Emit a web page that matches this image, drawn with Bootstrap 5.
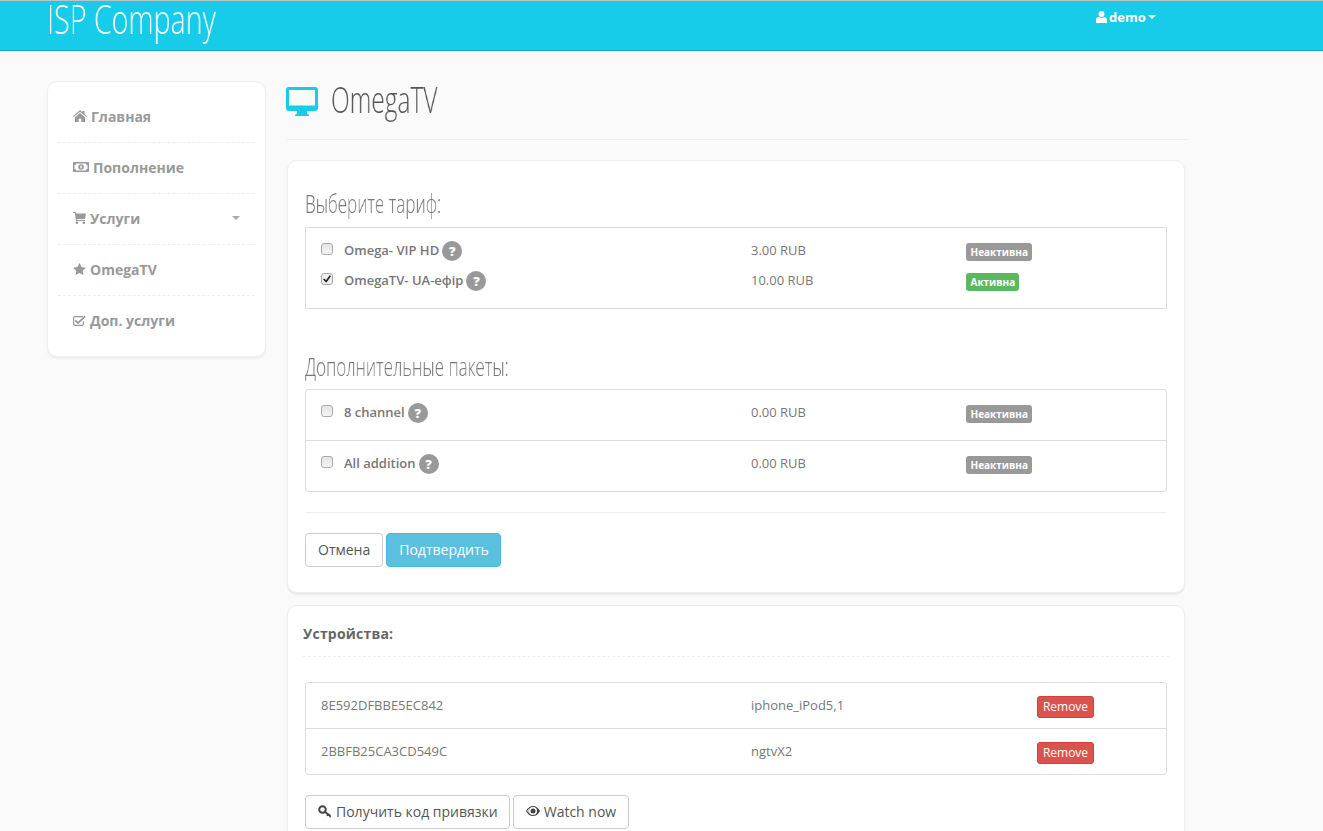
<!DOCTYPE html>
<html lang="ru">
<head>
<meta charset="utf-8">
<title>OmegaTV</title>
<link href="https://cdn.jsdelivr.net/npm/bootstrap@5.3.0/dist/css/bootstrap.min.css" rel="stylesheet">
<style>
html,body{height:831px;overflow:hidden}
body{background:#fafafa;font-family:"Open Sans","Noto Sans",sans-serif;font-size:13px;color:#777}
.topbar{height:51px;background:#17cce9;border-top:1px solid #b9c4c6;border-bottom:1px solid #10aac4;padding:0;align-items:flex-start;flex-wrap:nowrap}
.brandname{display:block;margin-left:47px;color:#fff;font-size:40px;font-weight:300;line-height:36px;transform:scaleX(.714);transform-origin:0 0;will-change:transform;white-space:nowrap;padding:0;text-decoration:none}
.usermenu{position:absolute;left:1096px;top:7px;color:#fff;font-size:13px;font-weight:700;display:flex;align-items:center;gap:2px;line-height:18px;text-decoration:none}
.usermenu svg{fill:#fff}
.caretmark{display:inline-block;border-left:4px solid transparent;border-right:4px solid transparent;border-top:4px solid currentColor}
.pagewrap{padding:30px 0 0 47px;gap:21px}
.sidepanel{width:219px;height:276px;flex:none;border:1px solid #eee;border-radius:10px;box-shadow:0 2px 2px #eee;background:#fff;padding:10px 10px}
.sideitem{height:51px;display:flex;align-items:center;padding:0 15px 2px;gap:4px;color:#999;font-size:14px;font-weight:700;border-bottom:1px dashed #eee;text-decoration:none}
.sideitem:last-child{border-bottom:0}
.sideitem svg{fill:#999;flex:none}
.sideitem .caretmark{margin-left:auto;color:#aaa}
.mainarea{width:902px;flex:none}
.pagehead{height:59px;border-bottom:1px solid #eee;margin:0 0 20px;width:901px;display:flex;align-items:flex-start;gap:12px;padding-top:6px}
.pagehead svg{margin-left:-1px;margin-right:1px}
.pagehead h1{font-size:36px;font-weight:300;color:#555;margin:0;line-height:26px;transform:scaleX(.68);transform-origin:0 0;will-change:transform;white-space:nowrap}
.whitebox{width:898px;border:1px solid #eee;border-radius:10px;box-shadow:0 2px 2px #e8e8e8;background:#fff;margin-bottom:12px}
.boxone{height:433px;padding:0 17px}
.boxtwo{height:400px;padding:0 15px}
.sectitle{font-size:25px;font-weight:300;color:#777;margin:0;line-height:30px;transform:scaleX(.68);transform-origin:0 0;will-change:transform;white-space:nowrap}
.titleone{padding-top:27px;height:66px}
.titletwo{margin-top:43px;height:37px;line-height:28px}
.framed{border:1px solid #ddd;padding:0}
.tarifbox{height:82px;padding-top:8px;border-radius:0}
.addonbox{border-radius:3px}
.devicebox{border-radius:3px;margin:0 2px}
.linerow{display:flex;align-items:center;padding:0 0 0 15px;background:transparent;border:0;color:#777;font-size:13px}
.tarifbox .linerow{height:30px}
.addonbox .linerow{height:50px;align-items:flex-start;padding-top:13px}
.addonbox .linerow+.linerow{height:51px;border-top:1px solid #ddd}
.devicebox .linerow{height:45px}
.devicebox .linerow+.linerow{height:46px;border-top:1px solid #ddd}
.namecell{width:430px;flex:none;display:flex;align-items:center;font-weight:600;gap:3px}
.namecell input{appearance:none;width:12px;height:12px;margin:-4px 8px 0 0;flex:none;border:1px solid #aaa;border-radius:3px;background:linear-gradient(#e4e4e4,#f4f4f4)}
.namecell input:checked{background:url("data:image/svg+xml,%3Csvg xmlns='http://www.w3.org/2000/svg' viewBox='0 0 12 12'%3E%3Cpath d='M2 6l3 3 5-7' fill='none' stroke='%23222' stroke-width='2'/%3E%3C/svg%3E") center/10px no-repeat,#eee}
.pricecell{width:215px;flex:none}
.devid{width:430px;flex:none}
.devname{width:286px;flex:none}
.helpdot{display:inline-flex;width:20px;height:20px;border-radius:50%;background:#999;color:#fff;font-weight:800;font-size:13px;align-items:center;justify-content:center;line-height:1}
.statebadge{font-size:10px;font-weight:700;line-height:12px;padding:3px 4.5px;border-radius:3px;color:#fff;margin-top:2px}
.stateoff{background:#999}
.stateon{background:#5cb85c;padding-right:4px}
.softrule{border-top:1px solid #eee;margin:20px 0 20px;opacity:1;height:0}
.plainbtn{font-size:14px;color:#555;background:#fff;border:1px solid #ccc;border-radius:4px;height:34px;padding:0 12px 2px;display:inline-flex;align-items:center;gap:4px}
.plainbtn svg{flex:none}
.keybtn{padding-right:11px}
.confirmbtn{font-size:14px;color:#fff;background:#5bc0de;border:1px solid #46b8da;border-radius:4px;height:34px;padding:0 11px 2px 12px;display:inline-flex;align-items:center;font-weight:400}
.btnstrip{gap:3px}
.removebtn{font-size:12px;color:#fff;background:#d9534f;border:1px solid #d43f3a;border-radius:3px;height:22px;width:57px;padding:0;margin-top:3px;display:inline-flex;align-items:center;justify-content:center;line-height:1}
.devhead{margin:0;padding-top:16px;font-size:14px;font-weight:700;color:#666;line-height:24px;letter-spacing:.2px;border-bottom:1px dashed #eee;width:866px;box-sizing:content-box;height:34px}
.devlist{margin-top:25px}
.devbtns{margin:20px 2px 0}
</style>
</head>
<body>
<nav class="navbar topbar position-relative">
  <a class="brandname" href="#">ISP Company</a>
  <a class="usermenu" href="#"><svg width="11" height="12" viewBox="0 0 11 12"><circle cx="5.500" cy="3" r="3"/><path d="M0 12V9c0-2 1.400-3 2.800-3 .8.600 1.700 1 2.700 1s1.900-.4 2.700-1C9.600 6 11 7 11 9v3z"/></svg>demo<span class="caretmark"></span></a>
</nav>
<div class="d-flex align-items-start pagewrap">
  <aside class="sidepanel">
    <a class="sideitem" href="#"><svg width="14" height="12" viewBox="0 0 14 12"><path d="M7 0l2.500 2.200V1h2v3l2.500 2.300-.7.700L7 1.700.7 7 0 6.300z"/><path d="M2 7.300L7 3l5 4.300V12H8.300V8.700H5.700V12H2z"/></svg>Главная</a>
    <a class="sideitem" href="#"><svg width="16" height="12" viewBox="0 0 16 12"><rect y="1" width="16" height="10" rx="1"/><path fill="#fff" d="M3 2.500h10c0 1 .5 1.500 1.500 1.500v4c-1 0-1.500.5-1.500 1.500H3c0-1-.5-1.500-1.500-1.500V4c1 0 1.500-.5 1.500-1.500z"/><circle cx="8" cy="6" r="2.800"/><rect fill="#fff" x="7.300" y="4.700" width="1.400" height="2.600"/></svg>Пополнение</a>
    <a class="sideitem" href="#"><svg width="13" height="12" viewBox="0 0 13 12"><path d="M0 0h2.500l.4 1.500H13l-1 5.500H3.800l.2 1h8v1H3L1.800 1H0z"/><circle cx="4" cy="10.700" r="1.300"/><circle cx="10.800" cy="10.700" r="1.300"/></svg>Услуги<span class="caretmark"></span></a>
    <a class="sideitem" href="#"><svg width="13" height="12" viewBox="0 0 13 12"><path d="M6.500 0l2 4.100 4.500.6-3.300 3.100.8 4.200-4-2.100-4 2.100.8-4.200L0 4.700l4.500-.6z"/></svg>OmegaTV</a>
    <a class="sideitem" href="#"><svg width="13" height="12" viewBox="0 0 13 12"><path d="M2 1h8v1.200H2a.8.800 0 00-.8.800v6c0 .5.300.8.800.8h7c.5 0 .8-.3.800-.8V7L11 5.800V9a2 2 0 01-2 2H2a2 2 0 01-2-2V3a2 2 0 012-2z"/><path d="M3 4.800l2 2L11.500.8l1.300 1.300L5 9.200 1.700 6z"/></svg>Доп. услуги</a>
  </aside>
  <main class="mainarea">
    <header class="pagehead">
      <svg width="32" height="30" viewBox="0 0 32 30"><path fill="#17cce9" fill-rule="evenodd" d="M3 0h26a3 3 0 013 3v18a3 3 0 01-3 3H3a3 3 0 01-3-3V3a3 3 0 013-3zm0 3v15.500h26V3z"/><path fill="#17cce9" d="M11 24h10v2.500l2 1.500v1H9v-1l2-1.500z"/></svg>
      <h1>OmegaTV</h1>
    </header>
    <section class="whitebox boxone">
      <h2 class="sectitle titleone">Выберите тариф:</h2>
      <ul class="list-group framed tarifbox">
        <li class="linerow"><label class="namecell"><input type="checkbox">Omega- VIP HD <span class="helpdot">?</span></label><span class="pricecell">3.00 RUB</span><span class="statebadge stateoff">Неактивна</span></li>
        <li class="linerow"><label class="namecell"><input type="checkbox" checked>OmegaTV- UA-ефір <span class="helpdot">?</span></label><span class="pricecell">10.00 RUB</span><span class="statebadge stateon">Активна</span></li>
      </ul>
      <h2 class="sectitle titletwo">Дополнительные пакеты:</h2>
      <ul class="list-group framed addonbox">
        <li class="linerow"><label class="namecell"><input type="checkbox">8 channel <span class="helpdot">?</span></label><span class="pricecell">0.00 RUB</span><span class="statebadge stateoff">Неактивна</span></li>
        <li class="linerow"><label class="namecell"><input type="checkbox">All addition <span class="helpdot">?</span></label><span class="pricecell">0.00 RUB</span><span class="statebadge stateoff">Неактивна</span></li>
      </ul>
      <hr class="softrule">
      <div class="d-flex btnstrip">
        <button class="btn plainbtn" type="button">Отмена</button>
        <button class="btn confirmbtn" type="button">Подтвердить</button>
      </div>
    </section>
    <section class="whitebox boxtwo">
      <h3 class="devhead">Устройства:</h3>
      <ul class="list-group framed devicebox devlist">
        <li class="linerow"><span class="devid">8E592DFBBE5EC842</span><span class="devname">iphone_iPod5,1</span><button class="btn removebtn" type="button">Remove</button></li>
        <li class="linerow"><span class="devid">2BBFB25CA3CD549C</span><span class="devname">ngtvX2</span><button class="btn removebtn" type="button">Remove</button></li>
      </ul>
      <div class="d-flex btnstrip devbtns">
        <button class="btn plainbtn keybtn" type="button"><svg width="14" height="13" viewBox="0 0 14 13"><circle cx="4.500" cy="4.500" r="3.300" fill="none" stroke="#444" stroke-width="2"/><path d="M7 7l5.500 4M10 9.200l-1 1.500M12.500 11l-1 1" fill="none" stroke="#444" stroke-width="2"/></svg>Получить код привязки</button>
        <button class="btn plainbtn" type="button"><svg width="14" height="10" viewBox="0 0 14 10"><path fill="#444" fill-rule="evenodd" d="M7 0c3 0 5.500 2 7 5-1.500 3-4 5-7 5S1.500 8 0 5c1.500-3 4-5 7-5zm0 1a4 4 0 100 8 4 4 0 000-8zM1.200 5c.6 1 1.300 1.800 2.200 2.400a4 4 0 010-4.800C2.500 3.200 1.800 4 1.200 5z"/><circle fill="#444" cx="7" cy="5" r="2.500"/></svg>Watch now</button>
      </div>
    </section>
  </main>
</div>
<script src="https://cdn.jsdelivr.net/npm/bootstrap@5.3.0/dist/js/bootstrap.bundle.min.js"></script>
</body>
</html>
